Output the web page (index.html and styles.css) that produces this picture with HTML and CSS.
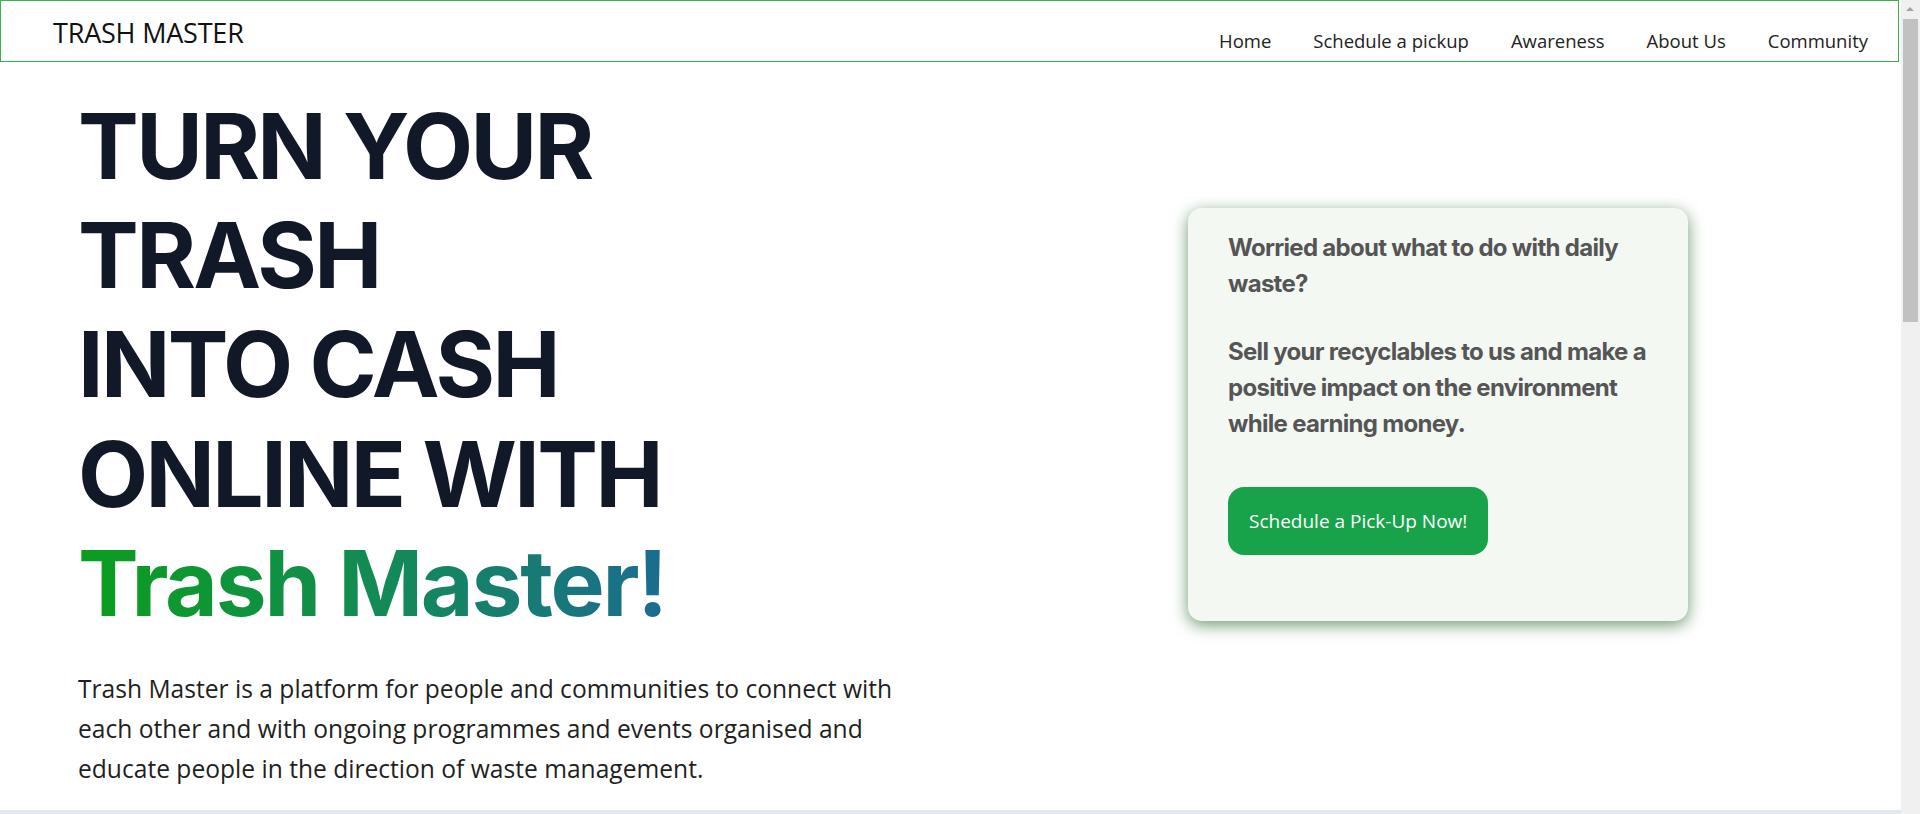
FILE: index.html
```html
<!DOCTYPE html>
<html lang="en">
<head>
<meta charset="utf-8">
<title>Trash Master</title>
<link rel="stylesheet" href="styles.css">
</head>
<body>
<div class="page">
  <header class="navbar">
    <div class="brand">TRASH MASTER</div>
    <nav class="nav-links">
      <a href="#">Home</a>
      <a href="#">Schedule a pickup</a>
      <a href="#">Awareness</a>
      <a href="#">About Us</a>
      <a href="#">Community</a>
    </nav>
  </header>
  <main>
    <section class="hero">
      <div class="hero-text">
        <h1 class="hero-title">TURN YOUR<br>TRASH<br>INTO CASH<br>ONLINE WITH<br><span class="gradient">Trash Master!</span></h1>
        <p class="hero-desc">Trash Master is a platform for people and communities to connect with each other and with ongoing programmes and events organised and educate people in the direction of waste management.</p>
      </div>
      <div class="card">
        <p class="card-text">Worried about what to do with daily waste?</p>
        <p class="card-text">Sell your recyclables to us and make a positive impact on the environment while earning money.</p>
        <button class="cta">Schedule a Pick-Up Now!</button>
      </div>
    </section>
    <section class="next-section"></section>
  </main>
</div>
<div class="scrollbar" aria-hidden="true">
  <div class="scroll-arrow"></div>
  <div class="scroll-thumb"></div>
</div>
</body>
</html>
```

FILE: styles.css
```css
* { box-sizing: border-box; }
html, body { margin: 0; padding: 0; }
body {
  font-family: "Open Sans", "Noto Sans", sans-serif;
  background: #ffffff;
  color: #1f1f1f;
}
.page {
  width: 1901px;
}
.navbar {
  display: flex;
  justify-content: space-between;
  align-items: flex-start;
  height: 62px;
  margin-right: 2px;
  border: 1px solid #35b548;
  padding: 0 30px 0 52px;
}
.brand {
  font-size: 27px;
  line-height: 1;
  margin-top: 18px;
  color: #111;
  letter-spacing: -0.2px;
}
.nav-links {
  display: flex;
  gap: 42px;
  margin-top: 29px;
}
.nav-links a {
  font-size: 18.5px;
  line-height: 1.2;
  color: #222;
  text-decoration: none;
}
.hero {
  display: flex;
  justify-content: space-between;
  align-items: flex-start;
  padding: 30px 213px 21px 78px;
}
.hero-title {
  margin: 0;
  font-family: "Inter", sans-serif;
  font-weight: 700;
  font-size: 91px;
  line-height: 1.2;
  color: #111827;
  letter-spacing: -2.6px;
}
.gradient {
  display: inline-block;
  letter-spacing: -2.2px;
  background: linear-gradient(to right, #0b9e1d, #13895a 55%, #1b6c90);
  -webkit-background-clip: text;
  background-clip: text;
  color: transparent;
}
.hero-desc {
  margin: 31px 0 0 0;
  width: 840px;
  font-size: 24.6px;
  line-height: 40px;
  color: #1f1f1f;
}
.card {
  width: 500px;
  margin-top: 116px;
  padding: 22px 40px 66px 40px;
  background: #f3f8f3;
  border-radius: 14px;
  box-shadow: 0 4px 16px rgba(30, 100, 35, 0.65);
}
.card-text {
  margin: 0 0 32px 0;
  font-family: "Inter", sans-serif;
  font-weight: 700;
  font-size: 24px;
  line-height: 36px;
  letter-spacing: -0.7px;
  color: #555555;
}
.card-text:last-of-type { margin-bottom: 0; }
.cta {
  margin-top: 45px;
  height: 68px;
  padding: 0 21px;
  border: none;
  border-radius: 16px;
  background: #18a34b;
  color: #ffffff;
  font-family: "Open Sans", sans-serif;
  font-size: 19px;
}
.next-section {
  height: 2500px;
  background: #e2e8f0;
}
.scrollbar {
  position: fixed;
  top: 0;
  right: 0;
  width: 19px;
  height: 100vh;
  background: #f0f0f0;
}
.scroll-arrow {
  position: absolute;
  top: 7px;
  left: 5px;
  width: 0;
  height: 0;
  border-left: 4.5px solid transparent;
  border-right: 4.5px solid transparent;
  border-bottom: 4px solid #a3a3a3;
}
.scroll-thumb {
  position: absolute;
  top: 19px;
  left: 2px;
  width: 15px;
  height: 303px;
  background: #c1c1c1;
}
```
